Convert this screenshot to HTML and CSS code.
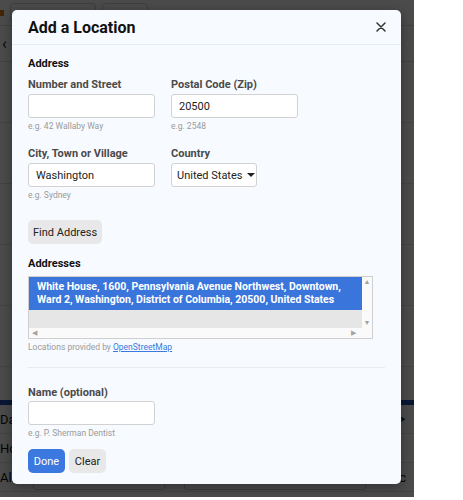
FILE: index.html
```html
<!DOCTYPE html>
<html lang="en">
<head>
    <meta charset="UTF-8">
    <meta name="viewport" content="width=device-width, initial-scale=1.0">
    <title>Add a Location</title>
    <link rel="stylesheet" href="styles.css">
</head>
<body>
    <div class="page">
        <!-- page behind the dialog -->
        <div class="toolbar">
            <span class="tag"></span>
            <span class="tool-btn wide"></span>
            <span class="tool-btn"></span>
        </div>
        <div class="back-row"><span class="back">&lsaquo;</span></div>
        <div class="rows">
            <div class="row"></div>
            <div class="row"></div>
            <div class="row"></div>
            <div class="row"></div>
            <div class="row"></div>
        </div>
        <div class="band"></div>
        <div class="row text-row"><span>Da</span><span class="chev">&#8811;</span></div>
        <div class="row text-row"><span>Ho</span></div>
        <div class="row text-row input-row"><span>All</span><span class="fake-input"></span><span class="fake-input long"></span><span>Loc</span></div>

        <div class="overlay"></div>

        <div class="modal">
            <div class="modal-header">
                <h2>Add a Location</h2>
                <button class="close" type="button" aria-label="Close">
                    <svg width="10" height="10" viewBox="0 0 10 10">
                        <path d="M1 1 L9 9 M9 1 L1 9" stroke="#333" stroke-width="1.5" stroke-linecap="round"/>
                    </svg>
                </button>
            </div>
            <div class="modal-body">
                <div class="section-title">Address</div>
                <div class="field-grid">
                    <div class="field">
                        <label>Number and Street</label>
                        <input type="text" class="text-input">
                        <div class="hint">e.g. 42 Wallaby Way</div>
                    </div>
                    <div class="field">
                        <label>Postal Code (Zip)</label>
                        <input type="text" class="text-input" value="20500">
                        <div class="hint">e.g. 2548</div>
                    </div>
                    <div class="field">
                        <label>City, Town or Village</label>
                        <input type="text" class="text-input" value="Washington">
                        <div class="hint">e.g. Sydney</div>
                    </div>
                    <div class="field">
                        <label>Country</label>
                        <div class="select">United States <span class="caret"></span></div>
                    </div>
                </div>

                <button type="button" class="btn btn-grey find">Find Address</button>

                <div class="section-title addresses">Addresses</div>
                <div class="listbox">
                    <div class="list-main">
                        <div class="list-items">
                            <div class="option selected">White House, 1600, Pennsylvania Avenue Northwest, Downtown, Ward 2, Washington, District of Columbia, 20500, United States</div>
                        </div>
                        <div class="vscroll">
                            <span class="arrow">&#9650;</span>
                            <span class="arrow">&#9660;</span>
                        </div>
                    </div>
                    <div class="hscroll">
                        <span class="arrow">&#9664;</span>
                        <span class="arrow">&#9654;</span>
                    </div>
                </div>
                <div class="hint credit">Locations provided by <a href="#">OpenStreetMap</a></div>

                <hr>

                <div class="field name-field">
                    <label>Name (optional)</label>
                    <input type="text" class="text-input">
                    <div class="hint">e.g. P. Sherman Dentist</div>
                </div>

                <div class="actions">
                    <button type="button" class="btn btn-blue">Done</button>
                    <button type="button" class="btn btn-grey">Clear</button>
                </div>
            </div>
        </div>
    </div>
</body>
</html>
```

FILE: styles.css
```css
body {
    margin: 0;
    padding: 0;
    background: #fff;
    font-family: Roboto, "Liberation Sans", Arial, sans-serif;
}

.page {
    position: relative;
    width: 414px;
    height: 497px;
    overflow: hidden;
    background: #fafafa;
    color: #222;
    font-size: 12px;
}

/* background page */
.toolbar {
    display: flex;
    align-items: center;
    gap: 6px;
    height: 25px;
    border-bottom: 1px solid #ddd;
}

.toolbar .tag {
    width: 4px;
    height: 6px;
    background: #e07a10;
}

.tool-btn {
    border: 1px solid #c8d0dd;
    border-radius: 4px;
    height: 18px;
    width: 44px;
}

.tool-btn.wide {
    width: 84px;
}

.back-row {
    height: 35px;
    border-bottom: 1px solid #ddd;
    display: flex;
    align-items: center;
    padding-left: 2px;
}

.back {
    font-size: 16px;
    color: #111;
}

.row {
    height: 60px;
    border-bottom: 1px solid #e2e2e2;
}

.band {
    height: 5px;
    margin-top: 33px;
    background: #1f4fae;
}

.text-row {
    height: 28px;
    display: flex;
    align-items: center;
    justify-content: space-between;
    font-size: 13px;
    color: #111;
    padding: 0 8px 0 0;
}

.chev {
    font-size: 15px;
}

.input-row {
    gap: 4px;
}

.fake-input {
    width: 130px;
    height: 24px;
    border: 1px solid #ccc;
    border-radius: 3px;
    background: #fff;
}

.fake-input.long {
    width: 180px;
}

.overlay {
    position: absolute;
    inset: 0;
    background: rgba(0, 0, 0, 0.7);
}

/* dialog */
.modal {
    position: absolute;
    top: 10px;
    left: 12px;
    width: 389px;
    background: #f7faff;
    border-radius: 5px;
    box-shadow: 0 3px 12px rgba(0, 0, 0, 0.35);
}

.modal-header {
    display: flex;
    align-items: center;
    justify-content: space-between;
    height: 34px;
    padding: 0 15px 0 16px;
    border-bottom: 1px solid #e6ecf3;
}

.modal-header h2 {
    margin: 0;
    font-size: 16px;
    font-weight: 700;
    color: #111;
}

.close {
    background: none;
    border: none;
    padding: 0;
    width: 10px;
    height: 10px;
    display: flex;
    cursor: pointer;
}

.modal-body {
    padding: 12px 16px 11px 16px;
}

.section-title {
    font-size: 11px;
    font-weight: 700;
    line-height: 13px;
    color: #111;
}

.field-grid {
    display: grid;
    grid-template-columns: 127px 127px;
    column-gap: 16px;
    row-gap: 15px;
    margin-top: 8px;
}

.field label {
    display: block;
    font-size: 11px;
    font-weight: 700;
    line-height: 13px;
    color: #4a4a4a;
    margin-bottom: 3px;
}

.text-input {
    box-sizing: border-box;
    width: 127px;
    height: 24px;
    border: 1px solid #d2d2d2;
    border-radius: 3px;
    background: #fff;
    padding: 0 7px;
    font-family: inherit;
    font-size: 11px;
    color: #222;
}

.hint {
    font-size: 8.5px;
    line-height: 11px;
    color: #9a9a9a;
    margin-top: 3px;
}

.select {
    box-sizing: border-box;
    width: 86px;
    height: 24px;
    border: 1px solid #d2d2d2;
    border-radius: 3px;
    background: #fff;
    display: flex;
    align-items: center;
    gap: 5px;
    padding-left: 5px;
    font-size: 11px;
    color: #222;
    white-space: nowrap;
}

.caret {
    width: 0;
    height: 0;
    border-left: 4px solid transparent;
    border-right: 4px solid transparent;
    border-top: 4px solid #222;
}

.btn {
    border: none;
    border-radius: 5px;
    height: 24px;
    padding: 0 7px;
    font-family: inherit;
    font-size: 11px;
    white-space: nowrap;
    cursor: pointer;
}

.btn-grey {
    background: #e8e8e8;
    color: #222;
}

.btn-blue {
    background: #3b78e0;
    color: #fff;
}

.find {
    margin-top: 19px;
    padding: 0 5px;
}

.addresses {
    margin-top: 13px;
}

.listbox {
    box-sizing: border-box;
    width: 345px;
    height: 63px;
    margin-top: 6px;
    border: 1px solid #cfcfcf;
    background: #fff;
    display: flex;
    flex-direction: column;
}

.list-main {
    display: flex;
    flex: 1;
}

.list-items {
    flex: 1;
    background: #e6e6e6;
}

.option {
    padding: 4px 8px;
    font-size: 10.5px;
    font-weight: 700;
    line-height: 12.5px;
}

.option.selected {
    background: #3a75dc;
    color: #fff;
}

.vscroll {
    width: 10px;
    display: flex;
    flex-direction: column;
    justify-content: space-between;
    align-items: center;
    background: #fafafa;
}

.hscroll {
    height: 10px;
    display: flex;
    justify-content: space-between;
    align-items: center;
    padding: 0 16px 0 3px;
    background: #fafafa;
}

.arrow {
    font-size: 7px;
    line-height: 10px;
    color: #a3a3a3;
}

.credit {
    margin-top: 3px;
}

.credit a {
    color: #3b78e0;
}

hr {
    border: none;
    border-top: 1px solid #e6ebf0;
    margin: 14px 0 0;
}

.name-field {
    margin-top: 18px;
}

.name-field label {
    margin-bottom: 2px;
}

.actions {
    display: flex;
    gap: 4px;
    margin-top: 10px;
}

.actions .btn {
    width: 37px;
    padding: 0;
}
```
